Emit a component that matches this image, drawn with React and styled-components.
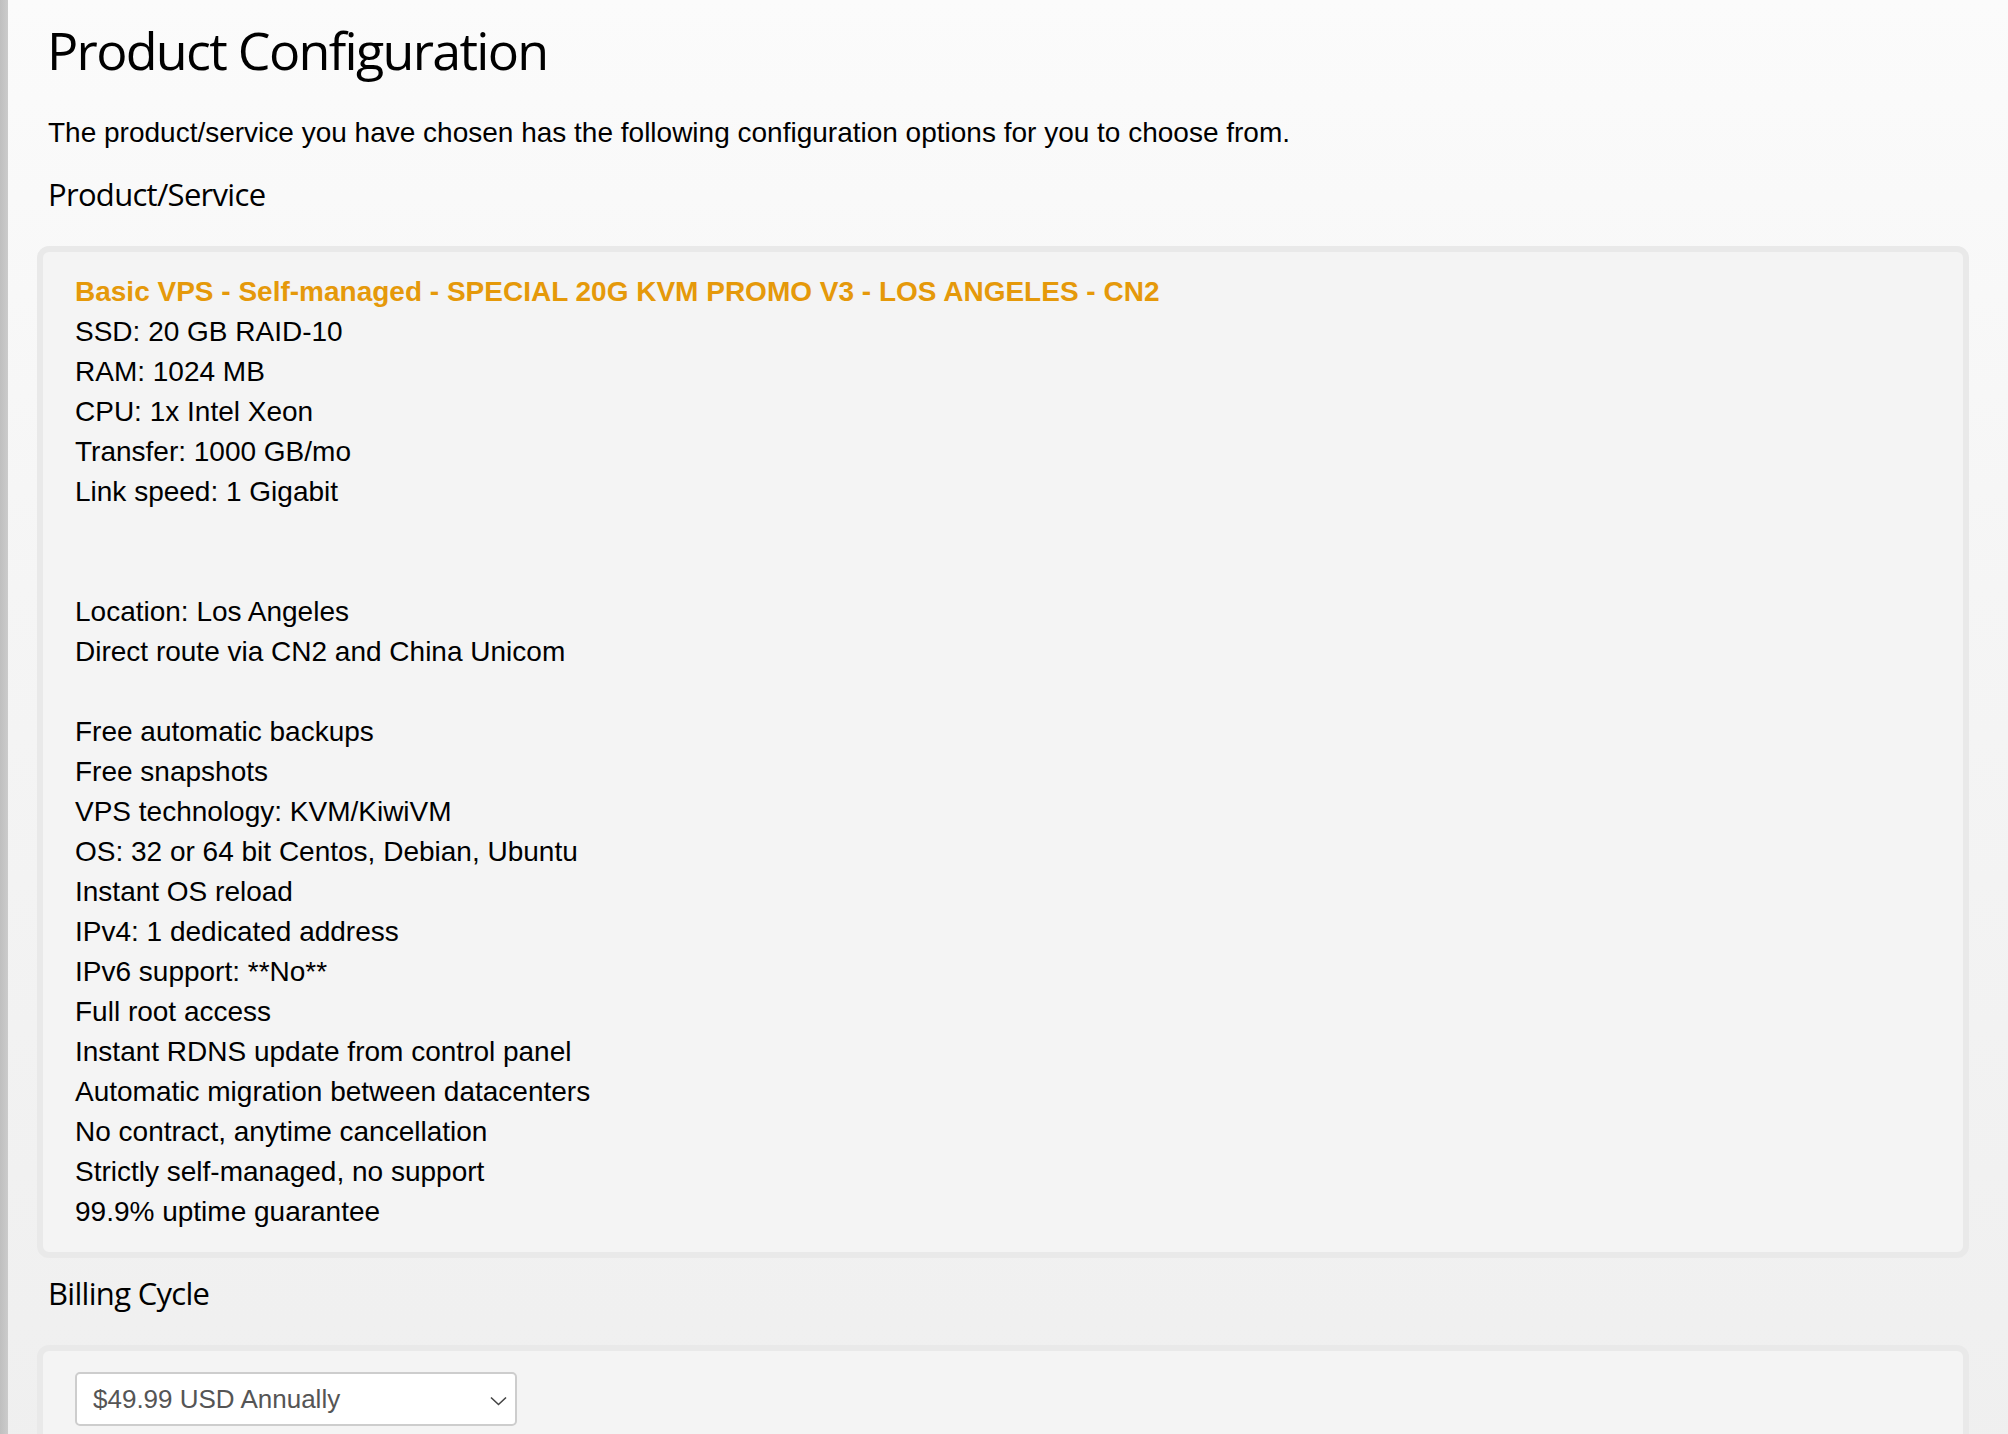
import React from "react";
import styled, { createGlobalStyle } from "styled-components";

const GlobalStyle = createGlobalStyle`
  html, body {
    margin: 0;
    padding: 0;
  }
  body {
    background: linear-gradient(180deg, #fbfbfb 0%, #f5f5f5 40%, #efefef 100%);
    font-family: "Liberation Sans", Arial, sans-serif;
    color: #000;
  }
`;

const Page = styled.div`
  display: flex;
  min-height: 100vh;
`;

const Stripe = styled.div`
  width: 8px;
  flex-shrink: 0;
  background: linear-gradient(90deg, #bfbfbf 0%, #cbcbcb 100%);
`;

const Main = styled.main`
  flex: 1;
  padding: 20px 39px 0 29px;
`;

const Title = styled.h1`
  margin: 0 0 33px 10px;
  font-family: "Open Sans", "Noto Sans", sans-serif;
  font-weight: 400;
  font-size: 52px;
  line-height: 60px;
  letter-spacing: -1.7px;
  color: #000;
`;

const Intro = styled.p`
  margin: 0 0 21px 11px;
  font-size: 28px;
  line-height: 40px;
`;

const SectionHeading = styled.h2`
  margin: 0 0 32px 11px;
  font-family: "Open Sans", "Noto Sans", sans-serif;
  font-weight: 400;
  font-size: 31px;
  line-height: 40px;
  letter-spacing: -0.7px;
  color: #000;
`;

const Card = styled.div`
  border: 6px solid #e9e9e9;
  border-radius: 12px;
  background: #f4f4f4;
  padding: ${p => p.$pad || "20px 32px"};
  margin-bottom: 15px;
`;

const ProductName = styled.div`
  font-weight: 700;
  font-size: 28px;
  line-height: 40px;
  color: #e5990a;
`;

const Line = styled.div`
  font-size: 28px;
  line-height: 40px;
  min-height: 40px;
`;

const SelectWrap = styled.div`
  position: relative;
  width: 442px;
`;

const Select = styled.select`
  appearance: none;
  -webkit-appearance: none;
  width: 100%;
  height: 54px;
  box-sizing: border-box;
  padding: 0 40px 0 16px;
  border: 2px solid #cdcdcd;
  border-radius: 5px;
  background: #fff;
  font-family: "Liberation Sans", Arial, sans-serif;
  font-size: 26px;
  color: #555;
  outline: none;
`;

const Chevron = styled.svg`
  position: absolute;
  right: 10px;
  top: 24px;
  pointer-events: none;
`;

const features = [
  "SSD: 20 GB RAID-10",
  "RAM: 1024 MB",
  "CPU: 1x Intel Xeon",
  "Transfer: 1000 GB/mo",
  "Link speed: 1 Gigabit",
  "",
  "",
  "Location: Los Angeles",
  "Direct route via CN2 and China Unicom",
  "",
  "Free automatic backups",
  "Free snapshots",
  "VPS technology: KVM/KiwiVM",
  "OS: 32 or 64 bit Centos, Debian, Ubuntu",
  "Instant OS reload",
  "IPv4: 1 dedicated address",
  "IPv6 support: **No**",
  "Full root access",
  "Instant RDNS update from control panel",
  "Automatic migration between datacenters",
  "No contract, anytime cancellation",
  "Strictly self-managed, no support",
  "99.9% uptime guarantee",
];

export default function App() {
  return (
    <>
      <GlobalStyle />
      <Page>
        <Stripe />
        <Main>
          <Title>Product Configuration</Title>
          <Intro>
            The product/service you have chosen has the following configuration options for you to choose from.
          </Intro>

          <SectionHeading>Product/Service</SectionHeading>
          <Card>
            <ProductName>
              Basic VPS - Self-managed - SPECIAL 20G KVM PROMO V3 - LOS ANGELES - CN2
            </ProductName>
            {features.map((f, i) => (
              <Line key={i}>{f}</Line>
            ))}
          </Card>

          <SectionHeading>Billing Cycle</SectionHeading>
          <Card $pad="21px 32px">
            <SelectWrap>
              <Select defaultValue="annually">
                <option value="annually">$49.99 USD Annually</option>
              </Select>
              <Chevron width="17" height="10" viewBox="0 0 17 10">
                <path d="M1 1.5 L8.5 8.5 L16 1.5" fill="none" stroke="#444" strokeWidth="1.6" />
              </Chevron>
            </SelectWrap>
          </Card>
        </Main>
      </Page>
    </>
  );
}
